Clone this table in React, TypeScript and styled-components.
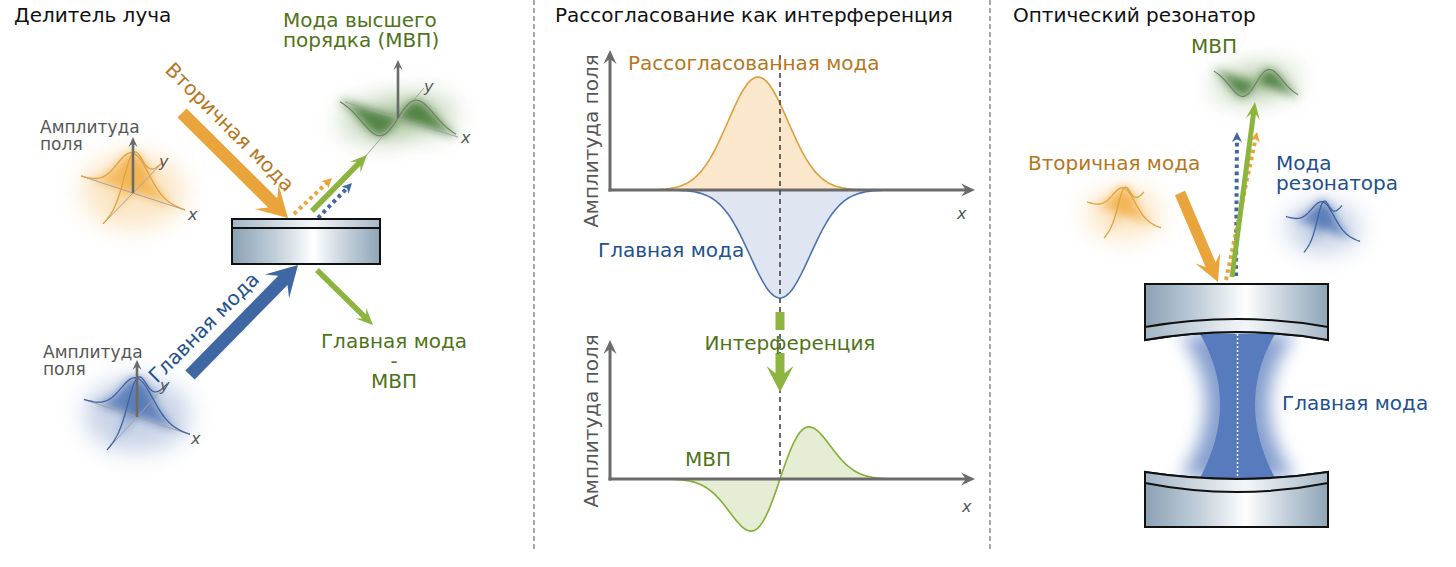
import React from "react";
import styled, { createGlobalStyle } from "styled-components";

type Pt = [number, number];

const C = {
  orange: "#e9a53b",
  orangeText: "#b5771d",
  orangeLine: "#e0a13f",
  blue: "#3f67a3",
  blueText: "#22508f",
  blueLine: "#3f639f",
  green: "#8db43e",
  greenText: "#4f7319",
  axis: "#6b6b6b",
  label: "#575757",
};

const GlobalStyle = createGlobalStyle`
  html, body { margin: 0; padding: 0; background: #fff; }
  body { font-family: "DejaVu Sans", "Noto Sans", sans-serif; }
`;

const Page = styled.main`
  display: flex;
  align-items: flex-start;
  width: 1456px;
  height: 567px;
  overflow: hidden;
  background: #fff;
`;

const Panel = styled.section<{ $w: number }>`
  display: grid;
  flex: none;
  width: ${(p) => p.$w}px;
  height: 567px;
  > * {
    grid-area: 1 / 1;
  }
`;

const Title = styled.h2<{ $indent: number }>`
  align-self: start;
  z-index: 1;
  margin: 0;
  padding: 4px 0 0 ${(p) => p.$indent}px;
  font-size: 20px;
  line-height: 22px;
  font-weight: normal;
  color: #111;
`;

const Divider = styled.div`
  flex: none;
  width: 2px;
  height: 552px;
  background: repeating-linear-gradient(to bottom, #a9a9a9 0 5px, transparent 5px 8px);
`;

const Figure = styled.svg`
  display: block;
  width: 100%;
  height: 567px;
  overflow: visible;
`;

const Label = styled.text<{ $c?: string; $s?: number; $i?: boolean }>`
  font-family: "DejaVu Sans", "Noto Sans", sans-serif;
  font-size: ${(p) => p.$s ?? 20}px;
  font-style: ${(p) => (p.$i ? "italic" : "normal")};
  fill: ${(p) => p.$c ?? "#111"};
`;

const Curve = styled.path<{ $c: string; $w?: number }>`
  fill: none;
  stroke: ${(p) => p.$c};
  stroke-width: ${(p) => p.$w ?? 1.3};
  stroke-linejoin: round;
`;

const Area = styled.path<{ $fill: string; $c: string }>`
  fill: ${(p) => p.$fill};
  stroke: ${(p) => p.$c};
  stroke-width: 1.6;
`;

const AxisLine = styled.line`
  stroke: #a3a3a3;
  stroke-width: 1;
`;

const Glass = styled.path`
  fill: url(#glass);
  stroke: #111;
  stroke-width: 2;
`;

const Coating = styled.path`
  fill: url(#glassLight);
  stroke: #111;
  stroke-width: 2;
`;

const DashLine = styled.line<{ $c: string; $w: number; $dash: string }>`
  stroke: ${(p) => p.$c};
  stroke-width: ${(p) => p.$w};
  stroke-dasharray: ${(p) => p.$dash};
`;

/* ---------- geometry helpers ---------- */

const gauss = (t: number) => Math.exp(-(t * t) / (2 * 0.3 * 0.3));
const homF = (t: number) => ((t / 0.36) * Math.exp(-(t * t) / (2 * 0.36 * 0.36))) / 0.6065;

const along = (o: Pt, dir: Pt, h: number, f: (t: number) => number, n = 60): Pt[] => {
  const out: Pt[] = [];
  for (let i = 0; i <= n; i++) {
    const t = -1 + (2 * i) / n;
    out.push([o[0] + t * dir[0], o[1] + t * dir[1] - h * f(t)]);
  }
  return out;
};

const toD = (p: Pt[]) => "M" + p.map(([x, y]) => `${x.toFixed(1)},${y.toFixed(1)}`).join(" L");

const closed = (p: Pt[], a: Pt, b: Pt) => `${toD(p)} L${b[0]},${b[1]} L${a[0]},${a[1]} Z`;

const plot = (x0: number, x1: number, base: number, f: (x: number) => number): Pt[] => {
  const out: Pt[] = [];
  for (let x = x0; x <= x1; x += 2) out.push([x, base - f(x)]);
  return out;
};

/* ---------- drawing parts ---------- */

const Arrow = ({
  from,
  to,
  w,
  hl,
  hw,
  color,
}: {
  from: Pt;
  to: Pt;
  w: number;
  hl: number;
  hw: number;
  color: string;
}) => {
  const dx = to[0] - from[0];
  const dy = to[1] - from[1];
  const L = Math.hypot(dx, dy);
  const u: Pt = [dx / L, dy / L];
  const n: Pt = [-u[1], u[0]];
  const at = (back: number, side: number): Pt => [
    to[0] - u[0] * back + n[0] * side,
    to[1] - u[1] * back + n[1] * side,
  ];
  const p: Pt[] = [
    [from[0] + (n[0] * w) / 2, from[1] + (n[1] * w) / 2],
    at(hl * 0.72, w / 2),
    at(hl, hw / 2),
    to,
    at(hl, -hw / 2),
    at(hl * 0.72, -w / 2),
    [from[0] - (n[0] * w) / 2, from[1] - (n[1] * w) / 2],
  ];
  return <polygon points={p.map((q) => q.join(",")).join(" ")} fill={color} />;
};

const DottedArrow = ({ from, to, color }: { from: Pt; to: Pt; color: string }) => {
  const dx = to[0] - from[0];
  const dy = to[1] - from[1];
  const L = Math.hypot(dx, dy);
  const end: Pt = [to[0] - (dx / L) * 7, to[1] - (dy / L) * 7];
  return (
    <g>
      <DashLine x1={from[0]} y1={from[1]} x2={end[0]} y2={end[1]} $c={color} $w={4} $dash="3.6 3.6" />
      <Arrow from={end} to={to} w={0.1} hl={10} hw={10} color={color} />
    </g>
  );
};

type Axes = { up: number; xl: Pt; yl: Pt; xLine?: [Pt, Pt]; yLine?: [Pt, Pt] };

const Gauss3D = ({
  o,
  X,
  Y,
  h,
  line,
  glow,
  axes,
}: {
  o: Pt;
  X: Pt;
  Y: Pt;
  h: number;
  line: string;
  glow: string;
  axes?: Axes;
}) => {
  const cx = along(o, X, h, gauss);
  const cy = along(o, Y, h, gauss);
  const xa: Pt = [o[0] - X[0], o[1] - X[1]];
  const xb: Pt = [o[0] + X[0], o[1] + X[1]];
  const ya: Pt = [o[0] - Y[0], o[1] - Y[1]];
  const yb: Pt = [o[0] + Y[0], o[1] + Y[1]];
  const rx = Math.hypot(X[0], X[1]);
  return (
    <g>
      <ellipse cx={o[0]} cy={o[1] - h * 0.05} rx={rx * 0.95} ry={h * 0.95} fill={glow} opacity={0.3} filter="url(#soft)" />
      <path d={closed(cx, xa, xb)} fill={glow} opacity={0.8} filter="url(#blur)" />
      <path d={closed(cy, ya, yb)} fill={glow} opacity={0.4} filter="url(#blur)" />
      {axes && (
        <>
          <AxisLine x1={xa[0]} y1={xa[1]} x2={xb[0]} y2={xb[1]} />
          <AxisLine x1={ya[0]} y1={ya[1]} x2={yb[0]} y2={yb[1]} />
        </>
      )}
      <Curve d={toD(cx)} $c={line} />
      <Curve d={toD(cy)} $c={line} />
      {axes && (
        <>
          <Arrow from={o} to={[o[0], o[1] - axes.up]} w={2.6} hl={10} hw={9} color={C.axis} />
          <Label x={axes.xl[0]} y={axes.xl[1]} $s={16} $i $c={C.label}>
            x
          </Label>
          <Label x={axes.yl[0]} y={axes.yl[1]} $s={16} $i $c={C.label}>
            y
          </Label>
        </>
      )}
    </g>
  );
};

const HomMode = ({ o, X, h, axes }: { o: Pt; X: Pt; h: number; axes?: Axes }) => {
  const c = along(o, X, h, homF);
  const a: Pt = [o[0] - X[0], o[1] - X[1]];
  const b: Pt = [o[0] + X[0], o[1] + X[1]];
  const left = c.slice(0, 31);
  const right = c.slice(30);
  return (
    <g>
      <ellipse cx={o[0] - X[0] * 0.35} cy={o[1] - X[1] * 0.35 + h * 0.4} rx={X[0] * 0.65} ry={h * 0.9} fill="#5d8d45" opacity={0.35} filter="url(#soft)" />
      <ellipse cx={o[0] + X[0] * 0.35} cy={o[1] + X[1] * 0.35 - h * 0.4} rx={X[0] * 0.65} ry={h * 0.9} fill="#5d8d45" opacity={0.35} filter="url(#soft)" />
      <path d={closed(left, a, o)} fill="#3f7630" opacity={0.85} filter="url(#blur)" />
      <path d={closed(right, o, b)} fill="#3f7630" opacity={0.85} filter="url(#blur)" />
      {axes && (
        <>
          {axes.xLine && <AxisLine x1={axes.xLine[0][0]} y1={axes.xLine[0][1]} x2={axes.xLine[1][0]} y2={axes.xLine[1][1]} />}
          {axes.yLine && <AxisLine x1={axes.yLine[0][0]} y1={axes.yLine[0][1]} x2={axes.yLine[1][0]} y2={axes.yLine[1][1]} />}
        </>
      )}
      <Curve d={toD(c)} $c="#6f7f60" $w={1.1} />
      {axes && (
        <>
          <Arrow from={o} to={[o[0], o[1] - axes.up]} w={2.6} hl={10} hw={9} color={C.axis} />
          <Label x={axes.xl[0]} y={axes.xl[1]} $s={16} $i $c={C.label}>
            x
          </Label>
          <Label x={axes.yl[0]} y={axes.yl[1]} $s={16} $i $c={C.label}>
            y
          </Label>
        </>
      )}
    </g>
  );
};

const PlotAxes = ({ y0, top }: { y0: number; top: number }) => (
  <g>
    <Arrow from={[610, y0 + 1.5]} to={[610, top]} w={3} hl={14} hw={13} color={C.axis} />
    <Arrow from={[608.5, y0]} to={[975, y0]} w={3} hl={14} hw={13} color={C.axis} />
  </g>
);

/* ---------- panels ---------- */

const Defs = () => (
  <defs>
    <filter id="blur" x="-50%" y="-50%" width="200%" height="200%">
      <feGaussianBlur stdDeviation="5" />
    </filter>
    <filter id="soft" x="-60%" y="-60%" width="220%" height="220%">
      <feGaussianBlur stdDeviation="12" />
    </filter>
    <filter id="beamGlow" x="-60%" y="-20%" width="220%" height="140%">
      <feGaussianBlur stdDeviation="9" />
    </filter>
    <linearGradient id="glass" x1="0" x2="1" y1="0" y2="0">
      <stop offset="0" stopColor="#8aa1b4" />
      <stop offset="0.3" stopColor="#c3d0db" />
      <stop offset="0.55" stopColor="#ffffff" />
      <stop offset="0.8" stopColor="#bccad6" />
      <stop offset="1" stopColor="#8ea5b7" />
    </linearGradient>
    <linearGradient id="glassLight" x1="0" x2="1" y1="0" y2="0">
      <stop offset="0" stopColor="#a3b6c6" />
      <stop offset="0.55" stopColor="#f4f7f9" />
      <stop offset="1" stopColor="#a6b8c7" />
    </linearGradient>
  </defs>
);

const BeamSplitterPanel = () => (
  <Panel $w={533}>
    <Title $indent={14}>Делитель луча</Title>
    <Figure viewBox="0 0 533 567">
      <Defs />
      <Gauss3D
        o={[133, 193]}
        X={[52, 17]}
        Y={[30, -31]}
        h={40}
        line={C.orangeLine}
        glow="#f2ae45"
        axes={{ up: 56, xl: [188, 220], yl: [159, 167] }}
      />
      <Gauss3D
        o={[137, 417]}
        X={[53, 17.5]}
        Y={[30, -33]}
        h={39}
        line={C.blueLine}
        glow="#4c70b0"
        axes={{ up: 57, xl: [191, 444], yl: [160, 391] }}
      />
      <HomMode
        o={[398, 118]}
        X={[58, 18.5]}
        h={24}
        axes={{ up: 58, xl: [461, 143], yl: [424, 92], xLine: [[345, 102], [458, 137]], yLine: [[358, 165], [424, 88]] }}
      />

      <Arrow from={[182, 113]} to={[288, 218]} w={13} hl={30} hw={34} color={C.orange} />
      <Arrow from={[190, 375]} to={[298, 265]} w={13} hl={30} hw={34} color={C.blue} />
      <Arrow from={[312, 211]} to={[367, 155]} w={5.5} hl={17} hw={15} color={C.green} />
      <Arrow from={[317, 270]} to={[373, 325]} w={5.5} hl={17} hw={15} color={C.green} />
      <DottedArrow from={[294, 214]} to={[332, 178]} color={C.orange} />
      <DottedArrow from={[318, 218]} to={[352, 183]} color={C.blue} />

      <Glass d="M232,219 H380 V264 H232 Z" />
      <Coating d="M232,219 H380 V228 H232 Z" />

      <Label x={283} y={27} $c={C.greenText}>
        Мода высшего
      </Label>
      <Label x={283} y={47} $c={C.greenText}>
        порядка (МВП)
      </Label>
      <Label x={40} y={133} $s={17} $c={C.label}>
        Амплитуда
      </Label>
      <Label x={40} y={150} $s={17} $c={C.label}>
        поля
      </Label>
      <Label x={43} y={358} $s={17} $c={C.label}>
        Амплитуда
      </Label>
      <Label x={43} y={375} $s={17} $c={C.label}>
        поля
      </Label>
      <Label x={164} y={71} transform="rotate(45 164 71)" $c={C.orangeText}>
        Вторичная мода
      </Label>
      <Label x={157} y={384} transform="rotate(-45 157 384)" $c={C.blueText}>
        Главная мода
      </Label>
      <Label x={394} y={348} textAnchor="middle" $c={C.greenText}>
        Главная мода
      </Label>
      <Label x={394} y={368} textAnchor="middle" $c={C.greenText}>
        -
      </Label>
      <Label x={394} y={388} textAnchor="middle" $c={C.greenText}>
        МВП
      </Label>
    </Figure>
  </Panel>
);

const orange = plot(640, 880, 190, (x) => 113 * Math.exp(-((x - 758) ** 2) / (2 * 30 * 30)));
const blue = plot(660, 900, 190, (x) => -108 * Math.exp(-((x - 780) ** 2) / (2 * 30 * 30)));
const green = plot(650, 910, 479, (x) => {
  const u = (x - 780) / 29;
  return 86 * u * Math.exp(-(u * u) / 2);
});

const InterferencePanel = () => (
  <Panel $w={454}>
    <Title $indent={20}>Рассогласование как интерференция</Title>
    <Figure viewBox="535 0 454 567">
      <Area d={closed(orange, [640, 190], [880, 190])} $fill="#fbe8cc" $c="#dba03c" />
      <Area d={closed(blue, [660, 190], [900, 190])} $fill="#dfe6f1" $c="#4d72ad" />
      <Area d={closed(green, [650, 479], [910, 479])} $fill="#e5edd4" $c="#86ad35" />
      <PlotAxes y0={190} top={50} />
      <PlotAxes y0={479} top={340} />
      <DashLine x1={780} y1={55} x2={780} y2={478} $c="#444" $w={1.6} $dash="5 4" />

      <rect x={775.5} y={312} width={9} height={18} fill={C.green} />
      <Arrow from={[780, 353]} to={[780, 392]} w={9} hl={26} hw={27} color={C.green} />

      <Label transform="translate(598 141) rotate(-90)" textAnchor="middle" $c={C.label}>
        Амплитуда поля
      </Label>
      <Label transform="translate(598 421) rotate(-90)" textAnchor="middle" $c={C.label}>
        Амплитуда поля
      </Label>
      <Label x={957} y={219} $s={16} $i $c={C.label}>
        x
      </Label>
      <Label x={962} y={512} $s={16} $i $c={C.label}>
        x
      </Label>
      <Label x={628} y={70} $c={C.orangeText}>
        Рассогласованная мода
      </Label>
      <Label x={598} y={257} $c={C.blueText}>
        Главная мода
      </Label>
      <Label x={790} y={350} textAnchor="middle" $c={C.greenText}>
        Интерференция
      </Label>
      <Label x={685} y={466} $c={C.greenText}>
        МВП
      </Label>
    </Figure>
  </Panel>
);

const beam = "M1200,334 Q1240,403 1200,478 H1275 Q1235,403 1275,334 Z";
const beamWide = "M1180,334 Q1232,403 1180,478 H1295 Q1243,403 1295,334 Z";

const ResonatorPanel = () => (
  <Panel $w={465}>
    <Title $indent={22}>Оптический резонатор</Title>
    <Figure viewBox="991 0 465 567">
      <path d={beamWide} fill="#5a7dbd" opacity={0.75} filter="url(#beamGlow)" />
      <path d={beam} fill="#587bbd" />
      <DashLine x1={1237.5} y1={334} x2={1237.5} y2={478} $c="#fff" $w={1.5} $dash="2 2" />

      <Glass d="M1145,284 H1328 V340 Q1237,324 1145,340 Z" />
      <Coating d="M1145,327 Q1237,311 1328,327 V340 Q1237,324 1145,340 Z" />
      <Glass d="M1145,472 Q1237,486 1328,472 V527 H1145 Z" />
      <Coating d="M1145,472 Q1237,486 1328,472 V483 Q1237,501 1145,483 Z" />

      <Gauss3D o={[1124, 215]} X={[37, 13]} Y={[20, -23]} h={27} line={C.orangeLine} glow="#f2ae45" />
      <Gauss3D o={[1323, 229]} X={[37, 12.5]} Y={[19, -23.5]} h={27} line={C.blueLine} glow="#4c70b0" />
      <HomMode o={[1256, 83]} X={[42, 13.5]} h={18} />

      <Arrow from={[1180, 193]} to={[1218, 282]} w={11} hl={26} hw={27} color={C.orange} />
      <DottedArrow from={[1236, 276]} to={[1237, 132]} color={C.blue} />
      <DottedArrow from={[1226, 280]} to={[1257, 132]} color={C.orange} />
      <Arrow from={[1232, 277]} to={[1255, 102]} w={5} hl={17} hw={14} color={C.green} />

      <Label x={1191} y={53} $c={C.greenText}>
        МВП
      </Label>
      <Label x={1028} y={170} $c={C.orangeText}>
        Вторичная мода
      </Label>
      <Label x={1276} y={170} $c={C.blueText}>
        Мода
      </Label>
      <Label x={1276} y={190} $c={C.blueText}>
        резонатора
      </Label>
      <Label x={1282} y={410} $c={C.blueText}>
        Главная мода
      </Label>
    </Figure>
  </Panel>
);

export default function App() {
  return (
    <>
      <GlobalStyle />
      <Page>
        <BeamSplitterPanel />
        <Divider />
        <InterferencePanel />
        <Divider />
        <ResonatorPanel />
      </Page>
    </>
  );
}
